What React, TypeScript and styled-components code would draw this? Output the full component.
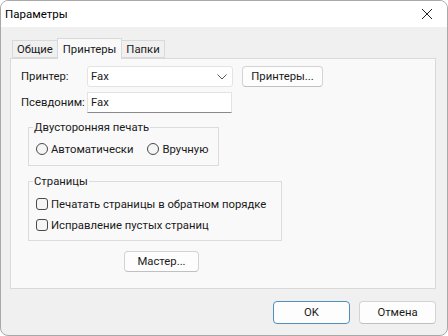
import React from 'react';
import styled, { createGlobalStyle } from 'styled-components';

const GlobalStyle = createGlobalStyle`
  html, body {
    margin: 0;
    padding: 0;
    background: #ffffff;
  }
  body {
    font-family: Roboto, "Liberation Sans", Arial, sans-serif;
    font-size: 11.3px;
    color: #1a1a1a;
  }
`;

const Window = styled.div`
  width: 448px;
  height: 336px;
  box-sizing: border-box;
  border: 1px solid #a8a8a8;
  border-radius: 8px;
  overflow: hidden;
  display: flex;
  flex-direction: column;
  background: #f0f0f0;
  white-space: nowrap;
`;

const TitleBar = styled.div`
  height: 26px;
  flex: none;
  background: #ffffff;
  display: flex;
  align-items: center;
  justify-content: space-between;
  padding: 0 0 0 4px;
`;

const Title = styled.span`
  font-size: 11.5px;
  color: #000;
`;

const CloseButton = styled.button`
  width: 40px;
  height: 26px;
  border: none;
  background: none;
  display: flex;
  align-items: center;
  justify-content: center;
  padding: 0;
`;

const Body = styled.div`
  flex: 1;
  display: flex;
  flex-direction: column;
  padding: 11px 11px 0 9px;
`;

const TabStrip = styled.div`
  display: flex;
  align-items: flex-end;
  height: 20px;
  padding-left: 2px;
  position: relative;
  z-index: 1;
`;

const Tab = styled.div<{ $active?: boolean }>`
  height: ${({ $active }) => ($active ? '21px' : '18px')};
  box-sizing: border-box;
  padding: 0 ${({ $active }) => ($active ? '5px' : '4px')};
  margin: ${({ $active }) => ($active ? '0 -1px -1px' : '0')};
  display: flex;
  align-items: center;
  background: ${({ $active }) => ($active ? '#f9f9f9' : '#f0f0f0')};
  border: 1px solid #d9d9d9;
  border-bottom: ${({ $active }) => ($active ? 'none' : '1px solid #d9d9d9')};
  position: relative;
  z-index: ${({ $active }) => ($active ? 2 : 1)};
`;

const Panel = styled.div`
  height: 231px;
  box-sizing: border-box;
  background: #f9f9f9;
  border: 1px solid #d9d9d9;
  padding: 7px 10px 0 10px;
  display: flex;
  flex-direction: column;
`;

const FieldRow = styled.div`
  display: flex;
  align-items: center;
  height: 21px;
  margin-bottom: 5px;
`;

const Label = styled.span`
  width: 66px;
  flex: none;
`;

const Combo = styled.div`
  width: 146px;
  height: 21px;
  box-sizing: border-box;
  background: #ffffff;
  border: 1px solid #e3e3e3;
  border-radius: 3px;
  display: flex;
  align-items: center;
  justify-content: space-between;
  padding: 0 5px 0 3px;
  margin-right: 9px;
`;

const TextInput = styled.div`
  width: 145px;
  height: 21px;
  box-sizing: border-box;
  background: #ffffff;
  border: 1px solid #e3e3e3;
  border-bottom: 1px solid #8a8a8a;
  display: flex;
  align-items: center;
  padding: 0 3px;
`;

const Button = styled.div<{ $primary?: boolean; $width: number; $height?: number }>`
  width: ${({ $width }) => $width}px;
  height: ${({ $height }) => $height ?? 21}px;
  box-sizing: border-box;
  background: #fdfdfd;
  border: 1px solid ${({ $primary }) => ($primary ? '#4f8fbd' : '#d3d3d3')};
  border-bottom-color: ${({ $primary }) => ($primary ? '#4f8fbd' : '#c0c0c0')};
  border-radius: 4px;
  display: flex;
  align-items: center;
  justify-content: center;
  color: #1a1a1a;
`;

const Group = styled.fieldset<{ $width: number; $height: number; $top: number }>`
  width: ${({ $width }) => $width}px;
  min-width: 0;
  height: ${({ $height }) => $height}px;
  box-sizing: border-box;
  margin: ${({ $top }) => $top}px 0 0 7px;
  padding: 0 7px 0 7px;
  border: 1px solid #dcdcdc;
  display: flex;
  flex-direction: column;
`;

const Legend = styled.legend`
  padding: 0 1px;
  margin-left: -3px;
  line-height: 13px;
`;

const RadioRow = styled.div`
  display: flex;
  align-items: center;
  gap: 14px;
  margin-top: 8px;
`;

const Option = styled.label`
  display: flex;
  align-items: center;
  gap: 3px;
  height: 14px;
`;

const Radio = styled.span`
  width: 12px;
  height: 12px;
  box-sizing: border-box;
  border-radius: 50%;
  border: 1px solid #4a4a4a;
  background: #f5f5f5;
`;

const Check = styled.span`
  width: 12px;
  height: 12px;
  box-sizing: border-box;
  border-radius: 3px;
  border: 1px solid #4a4a4a;
  background: #f5f5f5;
`;

const CheckList = styled.div`
  display: flex;
  flex-direction: column;
  gap: 7px;
  margin-top: 9px;
`;

const Centered = styled.div`
  display: flex;
  padding-left: 103px;
  margin-top: 10px;
`;

const Footer = styled.div`
  display: flex;
  justify-content: flex-end;
  gap: 9px;
  padding: 12px 0 0 0;
`;

const Chevron = () => (
  <svg width="10" height="6" viewBox="0 0 10 6">
    <path d="M0.5 0.5 L5 5 L9.5 0.5" fill="none" stroke="#555" strokeWidth="1" />
  </svg>
);

const CloseIcon = () => (
  <svg width="10" height="10" viewBox="0 0 10 10">
    <path d="M0 0 L10 10 M10 0 L0 10" stroke="#222" strokeWidth="1" />
  </svg>
);

export default function App() {
  return (
    <>
      <GlobalStyle />
      <Window>
        <TitleBar>
          <Title>Параметры</Title>
          <CloseButton>
            <CloseIcon />
          </CloseButton>
        </TitleBar>
        <Body>
          <TabStrip>
            <Tab>Общие</Tab>
            <Tab $active>Принтеры</Tab>
            <Tab>Папки</Tab>
          </TabStrip>
          <Panel>
            <FieldRow>
              <Label>Принтер:</Label>
              <Combo>
                <span>Fax</span>
                <Chevron />
              </Combo>
              <Button $width={81}>Принтеры...</Button>
            </FieldRow>
            <FieldRow>
              <Label>Псевдоним:</Label>
              <TextInput>Fax</TextInput>
            </FieldRow>
            <Group $width={191} $height={45} $top={3}>
              <Legend>Двусторонняя печать</Legend>
              <RadioRow>
                <Option>
                  <Radio />
                  Автоматически
                </Option>
                <Option>
                  <Radio />
                  Вручную
                </Option>
              </RadioRow>
            </Group>
            <Group $width={254} $height={66} $top={9}>
              <Legend>Страницы</Legend>
              <CheckList>
                <Option>
                  <Check />
                  Печатать страницы в обратном порядке
                </Option>
                <Option>
                  <Check />
                  Исправление пустых страниц
                </Option>
              </CheckList>
            </Group>
            <Centered>
              <Button $width={75}>Мастер...</Button>
            </Centered>
          </Panel>
          <Footer>
            <Button $primary $width={77} $height={23}>OK</Button>
            <Button $width={77} $height={23}>Отмена</Button>
          </Footer>
        </Body>
      </Window>
    </>
  );
}
